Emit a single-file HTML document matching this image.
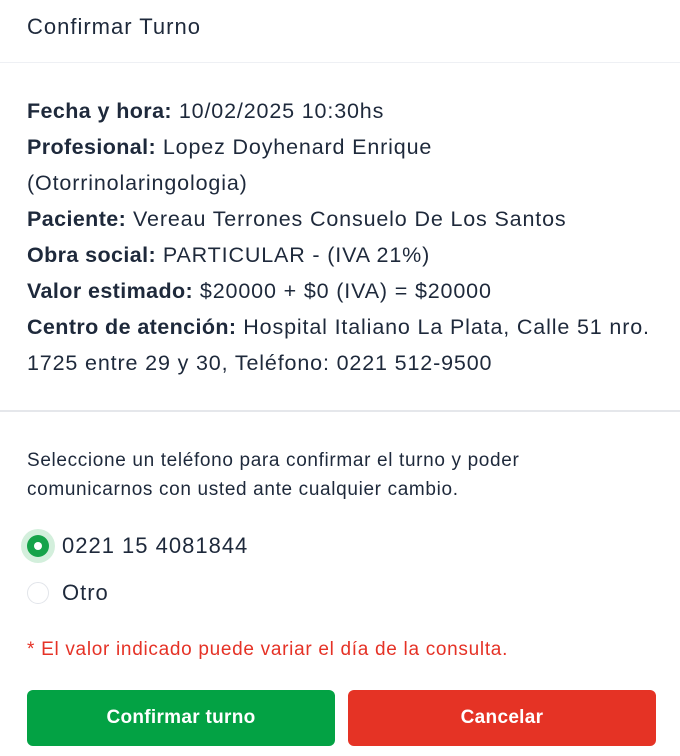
<!DOCTYPE html>
<html><head><style>
body{margin:0;width:680px;height:756px;background:#fff;font-family:"Liberation Sans",sans-serif;color:#1e293b;position:relative;overflow:hidden}
.a{position:absolute;white-space:nowrap}
.info{left:27px;font-size:21.5px;letter-spacing:0.85px}
b{font-weight:bold;letter-spacing:0.4px}
.btn{position:absolute;top:690px;height:56px;width:308px;border-radius:6px;color:#fff;font-weight:bold;font-size:19px;display:flex;align-items:center;justify-content:center;letter-spacing:0.3px}
</style></head><body>
<div class="a" style="left:27px;top:14px;font-size:22px;letter-spacing:1px">Confirmar Turno</div>
<div class="a" style="left:0;top:62px;width:680px;height:1px;background:#eef0f4"></div>
<div class="a info" style="top:99px"><b>Fecha y hora:</b> 10/02/2025 10:30hs</div>
<div class="a info" style="top:135px"><b>Profesional:</b> Lopez Doyhenard Enrique</div>
<div class="a info" style="top:171px">(Otorrinolaringologia)</div>
<div class="a info" style="top:207px"><b>Paciente:</b> Vereau Terrones Consuelo De Los Santos</div>
<div class="a info" style="top:243px"><b>Obra social:</b> PARTICULAR - (IVA 21%)</div>
<div class="a info" style="top:279px"><b>Valor estimado:</b> $20000 + $0 (IVA) = $20000</div>
<div class="a info" style="top:315px"><b>Centro de atención:</b> Hospital Italiano La Plata, Calle 51 nro.</div>
<div class="a info" style="top:351px">1725 entre 29 y 30, Teléfono: 0221 512-9500</div>
<div class="a" style="left:0;top:410px;width:680px;height:2px;background:#e5e7eb"></div>
<div class="a" style="left:27px;top:446px;font-size:19px;line-height:29px;letter-spacing:0.65px">Seleccione un teléfono para confirmar el turno y poder<br>comunicarnos con usted ante cualquier cambio.</div>
<div class="a" style="left:21px;top:529px;width:34px;height:34px;border-radius:50%;background:#d3efdc"></div>
<div class="a" style="left:27px;top:535px;width:22px;height:22px;border-radius:50%;background:#16a34a"></div>
<div class="a" style="left:34px;top:542px;width:8px;height:8px;border-radius:50%;background:#fff"></div>
<div class="a" style="left:62px;top:533px;font-size:22px;letter-spacing:1px">0221 15 4081844</div>
<div class="a" style="left:27px;top:582px;width:20px;height:20px;border-radius:50%;border:1px solid #e2e5ea"></div>
<div class="a" style="left:62px;top:580px;font-size:22px;letter-spacing:1px">Otro</div>
<div class="a" style="left:27px;top:639px;font-size:19px;color:#e53226;letter-spacing:0.7px">* El valor indicado puede variar el día de la consulta.</div>
<div class="btn" style="left:27px;background:#03a244">Confirmar turno</div>
<div class="btn" style="left:348px;background:#e53325">Cancelar</div>
</body></html>
